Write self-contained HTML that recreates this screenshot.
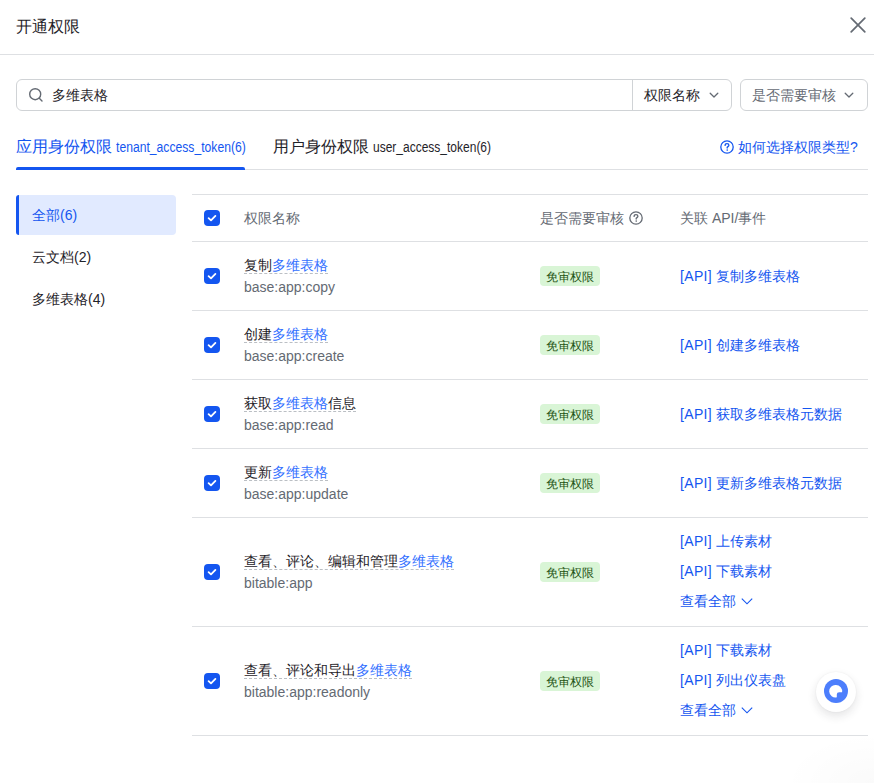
<!DOCTYPE html>
<html><head><meta charset="utf-8">
<style>
*{box-sizing:border-box;margin:0;padding:0}
html,body{width:874px;height:783px;overflow:hidden;background:#fff;font-family:"Liberation Sans",sans-serif;color:#1f2329;font-size:14px}
body{position:relative}
.abs{position:absolute;white-space:nowrap}
.title{left:16px;top:16px;font-size:16px;line-height:22px;color:#1f2329}
.hline{position:absolute;height:1px;background:#dee0e3}
.box{position:absolute;border:1px solid #d0d3d6;border-radius:6px}
.t14{font-size:14px;line-height:22px}
.blue{color:#1456f0}
.hl{color:#3370ff}
.grey{color:#646a73}
.tab{top:136px;font-size:16px;line-height:22px}
.lat{display:inline-block;transform-origin:0 50%}
.side{position:absolute;left:16px;width:160px;height:40px;padding-left:16px;line-height:40px;font-size:14px;white-space:nowrap}
.cb{position:absolute;left:204px;width:16px;height:16px;border-radius:4px;background:#1456f0}
.cb svg{position:absolute;left:0;top:0}
.tag{position:absolute;left:540px;width:60px;height:20px;border-radius:4px;background:#d9f5d6;color:#1d5212;font-size:12px;line-height:20px;padding-top:1px;text-align:center}
.pname{position:absolute;left:244px;font-size:14px;line-height:22px;white-space:nowrap}
.pname span.u{border-bottom:1px dashed #bbbfc4}
.pcode{position:absolute;left:244px;font-size:14px;line-height:22px;color:#646a73;white-space:nowrap}
.api b{font-weight:normal;letter-spacing:0.35px}
.api{position:absolute;left:680px;font-size:14px;line-height:22px;color:#1456f0;white-space:nowrap}
.fab{position:absolute;left:816px;top:672px;width:40px;height:40px;border-radius:50%;background:#fff;box-shadow:0 4px 10px rgba(31,35,41,0.12),0 0 2px rgba(31,35,41,0.06)}
.corner{position:absolute;left:0;top:0;width:874px;height:783px;background:radial-gradient(ellipse 90px 50px at 874px 783px,rgba(0,0,0,0.02),rgba(0,0,0,0))}
</style></head><body>
<div class="abs title">开通权限</div>
<svg class="abs" style="left:850px;top:17px" width="16" height="16" viewBox="0 0 16 16"><path d="M1.2 1.2L14.8 14.8M14.8 1.2L1.2 14.8" stroke="#646a73" stroke-width="1.7" fill="none" stroke-linecap="round"/></svg>
<div class="hline" style="left:0;top:54px;width:874px"></div>
<div class="box" style="left:16px;top:79px;width:716px;height:32px"></div>
<svg class="abs" style="left:28px;top:87px" width="16" height="16" viewBox="0 0 16 16"><circle cx="7.2" cy="7.2" r="5.5" stroke="#646a73" stroke-width="1.4" fill="none"/><path d="M11.3 11.3L14 14" stroke="#646a73" stroke-width="1.4" stroke-linecap="round"/></svg>
<div class="abs t14" style="left:52px;top:84px">多维表格</div>
<div class="abs" style="left:632px;top:80px;width:1px;height:30px;background:#d0d3d6"></div>
<div class="abs t14" style="left:644px;top:84px">权限名称</div>
<svg width="12" height="12" viewBox="0 0 12 12" style="position:absolute;left:708px;top:89px;"><path d="M2.2 4.2L6 8L9.8 4.2" stroke="#646a73" stroke-width="1.3" fill="none" stroke-linecap="round" stroke-linejoin="round"/></svg>
<div class="box" style="left:740px;top:79px;width:128px;height:32px"></div>
<div class="abs t14 grey" style="left:752px;top:84px">是否需要审核</div>
<svg width="12" height="12" viewBox="0 0 12 12" style="position:absolute;left:843px;top:89px;"><path d="M2.2 4.2L6 8L9.8 4.2" stroke="#646a73" stroke-width="1.3" fill="none" stroke-linecap="round" stroke-linejoin="round"/></svg>
<div class="abs tab blue" style="left:16px">应用身份权限 <span class="lat" style="font-size:14px;transform:scaleX(0.8685)">tenant_access_token(6)</span></div>
<div class="abs tab" style="left:273px">用户身份权限 <span class="lat" style="font-size:14px;transform:scaleX(0.8570)">user_access_token(6)</span></div>
<svg class="abs" style="left:720px;top:140px" width="14" height="14" viewBox="0 0 14 14"><circle cx="7" cy="7" r="6.2" stroke="#1456f0" stroke-width="1.3" fill="none"/><path d="M5.1 5.4C5.1 4.3 6 3.6 7 3.6C8 3.6 8.9 4.3 8.9 5.3C8.9 6.4 7.6 6.6 7.2 7.4L7.2 8.1" stroke="#1456f0" stroke-width="1.3" fill="none" stroke-linecap="round"/><circle cx="7.2" cy="10.1" r="0.8" fill="#1456f0"/></svg>
<div class="abs t14 blue" style="left:738px;top:136px">如何选择权限类型?</div>
<div class="hline" style="left:16px;top:169px;width:852px"></div>
<div class="abs" style="left:16px;top:167px;width:229px;height:3px;border-radius:2px 2px 0 0;background:#1456f0"></div>
<div class="side blue" style="top:195px;background:#e1eaff;border-left:3px solid #1456f0;padding-left:13px;border-radius:3px 4px 4px 3px">全部(6)</div>
<div class="side" style="top:237px">云文档(2)</div>
<div class="side" style="top:279px">多维表格(4)</div>
<div class="hline" style="left:192px;top:194px;width:676px"></div>
<div class="cb" style="top:210px"><svg width="16" height="16" viewBox="0 0 16 16"><path d="M4.6 8.1L7 10.4L11.4 5.9" stroke="#fff" stroke-width="1.8" fill="none" stroke-linecap="round" stroke-linejoin="round"/></svg></div>
<div class="abs t14 grey" style="left:244px;top:207px">权限名称</div>
<div class="abs t14 grey" style="left:540px;top:207px">是否需要审核</div>
<svg class="abs" style="left:629px;top:211px" width="14" height="14" viewBox="0 0 14 14"><circle cx="7" cy="7" r="6.2" stroke="#646a73" stroke-width="1.3" fill="none"/><path d="M5.1 5.4C5.1 4.3 6 3.6 7 3.6C8 3.6 8.9 4.3 8.9 5.3C8.9 6.4 7.6 6.6 7.2 7.4L7.2 8.1" stroke="#646a73" stroke-width="1.3" fill="none" stroke-linecap="round"/><circle cx="7.2" cy="10.1" r="0.8" fill="#646a73"/></svg>
<div class="abs t14 grey" style="left:680px;top:207px">关联 API/事件</div>
<div class="hline" style="left:192px;top:241px;width:676px"></div>
<div class="cb" style="top:268px"><svg width="16" height="16" viewBox="0 0 16 16"><path d="M4.6 8.1L7 10.4L11.4 5.9" stroke="#fff" stroke-width="1.8" fill="none" stroke-linecap="round" stroke-linejoin="round"/></svg></div>
<div class="pname" style="top:254px"><span class="u">复制<span class="hl">多维表格</span></span></div>
<div class="pcode" style="top:276px">base:app:copy</div>
<div class="tag" style="top:266px">免审权限</div>
<div class="api" style="top:265px"><b>[API]</b> 复制多维表格</div>
<div class="hline" style="left:192px;top:310px;width:676px"></div>
<div class="cb" style="top:337px"><svg width="16" height="16" viewBox="0 0 16 16"><path d="M4.6 8.1L7 10.4L11.4 5.9" stroke="#fff" stroke-width="1.8" fill="none" stroke-linecap="round" stroke-linejoin="round"/></svg></div>
<div class="pname" style="top:323px"><span class="u">创建<span class="hl">多维表格</span></span></div>
<div class="pcode" style="top:345px">base:app:create</div>
<div class="tag" style="top:335px">免审权限</div>
<div class="api" style="top:334px"><b>[API]</b> 创建多维表格</div>
<div class="hline" style="left:192px;top:379px;width:676px"></div>
<div class="cb" style="top:406px"><svg width="16" height="16" viewBox="0 0 16 16"><path d="M4.6 8.1L7 10.4L11.4 5.9" stroke="#fff" stroke-width="1.8" fill="none" stroke-linecap="round" stroke-linejoin="round"/></svg></div>
<div class="pname" style="top:392px"><span class="u">获取<span class="hl">多维表格</span>信息</span></div>
<div class="pcode" style="top:414px">base:app:read</div>
<div class="tag" style="top:404px">免审权限</div>
<div class="api" style="top:403px"><b>[API]</b> 获取多维表格元数据</div>
<div class="hline" style="left:192px;top:448px;width:676px"></div>
<div class="cb" style="top:475px"><svg width="16" height="16" viewBox="0 0 16 16"><path d="M4.6 8.1L7 10.4L11.4 5.9" stroke="#fff" stroke-width="1.8" fill="none" stroke-linecap="round" stroke-linejoin="round"/></svg></div>
<div class="pname" style="top:461px"><span class="u">更新<span class="hl">多维表格</span></span></div>
<div class="pcode" style="top:483px">base:app:update</div>
<div class="tag" style="top:473px">免审权限</div>
<div class="api" style="top:472px"><b>[API]</b> 更新多维表格元数据</div>
<div class="hline" style="left:192px;top:517px;width:676px"></div>
<div class="cb" style="top:564px"><svg width="16" height="16" viewBox="0 0 16 16"><path d="M4.6 8.1L7 10.4L11.4 5.9" stroke="#fff" stroke-width="1.8" fill="none" stroke-linecap="round" stroke-linejoin="round"/></svg></div>
<div class="pname" style="top:550px"><span class="u">查看、评论、编辑和管理<span class="hl">多维表格</span></span></div>
<div class="pcode" style="top:572px">bitable:app</div>
<div class="tag" style="top:562px">免审权限</div>
<div class="api" style="top:530px"><b>[API]</b> 上传素材</div>
<div class="api" style="top:560px"><b>[API]</b> 下载素材</div>
<div class="api" style="top:590px">查看全部</div>
<svg class="abs" style="left:741px;top:595px" width="12" height="12" viewBox="0 0 12 12"><path d="M0.8 3.6L6 8.8L11.2 3.6" stroke="#1456f0" stroke-width="1.15" fill="none"/></svg>
<div class="hline" style="left:192px;top:626px;width:676px"></div>
<div class="cb" style="top:673px"><svg width="16" height="16" viewBox="0 0 16 16"><path d="M4.6 8.1L7 10.4L11.4 5.9" stroke="#fff" stroke-width="1.8" fill="none" stroke-linecap="round" stroke-linejoin="round"/></svg></div>
<div class="pname" style="top:659px"><span class="u">查看、评论和导出<span class="hl">多维表格</span></span></div>
<div class="pcode" style="top:681px">bitable:app:readonly</div>
<div class="tag" style="top:671px">免审权限</div>
<div class="api" style="top:639px"><b>[API]</b> 下载素材</div>
<div class="api" style="top:669px"><b>[API]</b> 列出仪表盘</div>
<div class="api" style="top:699px">查看全部</div>
<svg class="abs" style="left:741px;top:704px" width="12" height="12" viewBox="0 0 12 12"><path d="M0.8 3.6L6 8.8L11.2 3.6" stroke="#1456f0" stroke-width="1.15" fill="none"/></svg>
<div class="hline" style="left:192px;top:735px;width:676px"></div>
<div class="corner"></div>
<div class="fab"><svg width="40" height="40" viewBox="0 0 40 40" style="position:absolute;left:0;top:0"><circle cx="20" cy="19" r="12" fill="#4c7efc"/><path d="M20 13A6.2 6.2 0 1 0 20.8 25.2L20.8 22.6Q20.8 20.2 23.2 20.2L26.1 20.2A6.2 6.2 0 0 0 20 13Z" fill="#fff"/></svg></div>
</body></html>
